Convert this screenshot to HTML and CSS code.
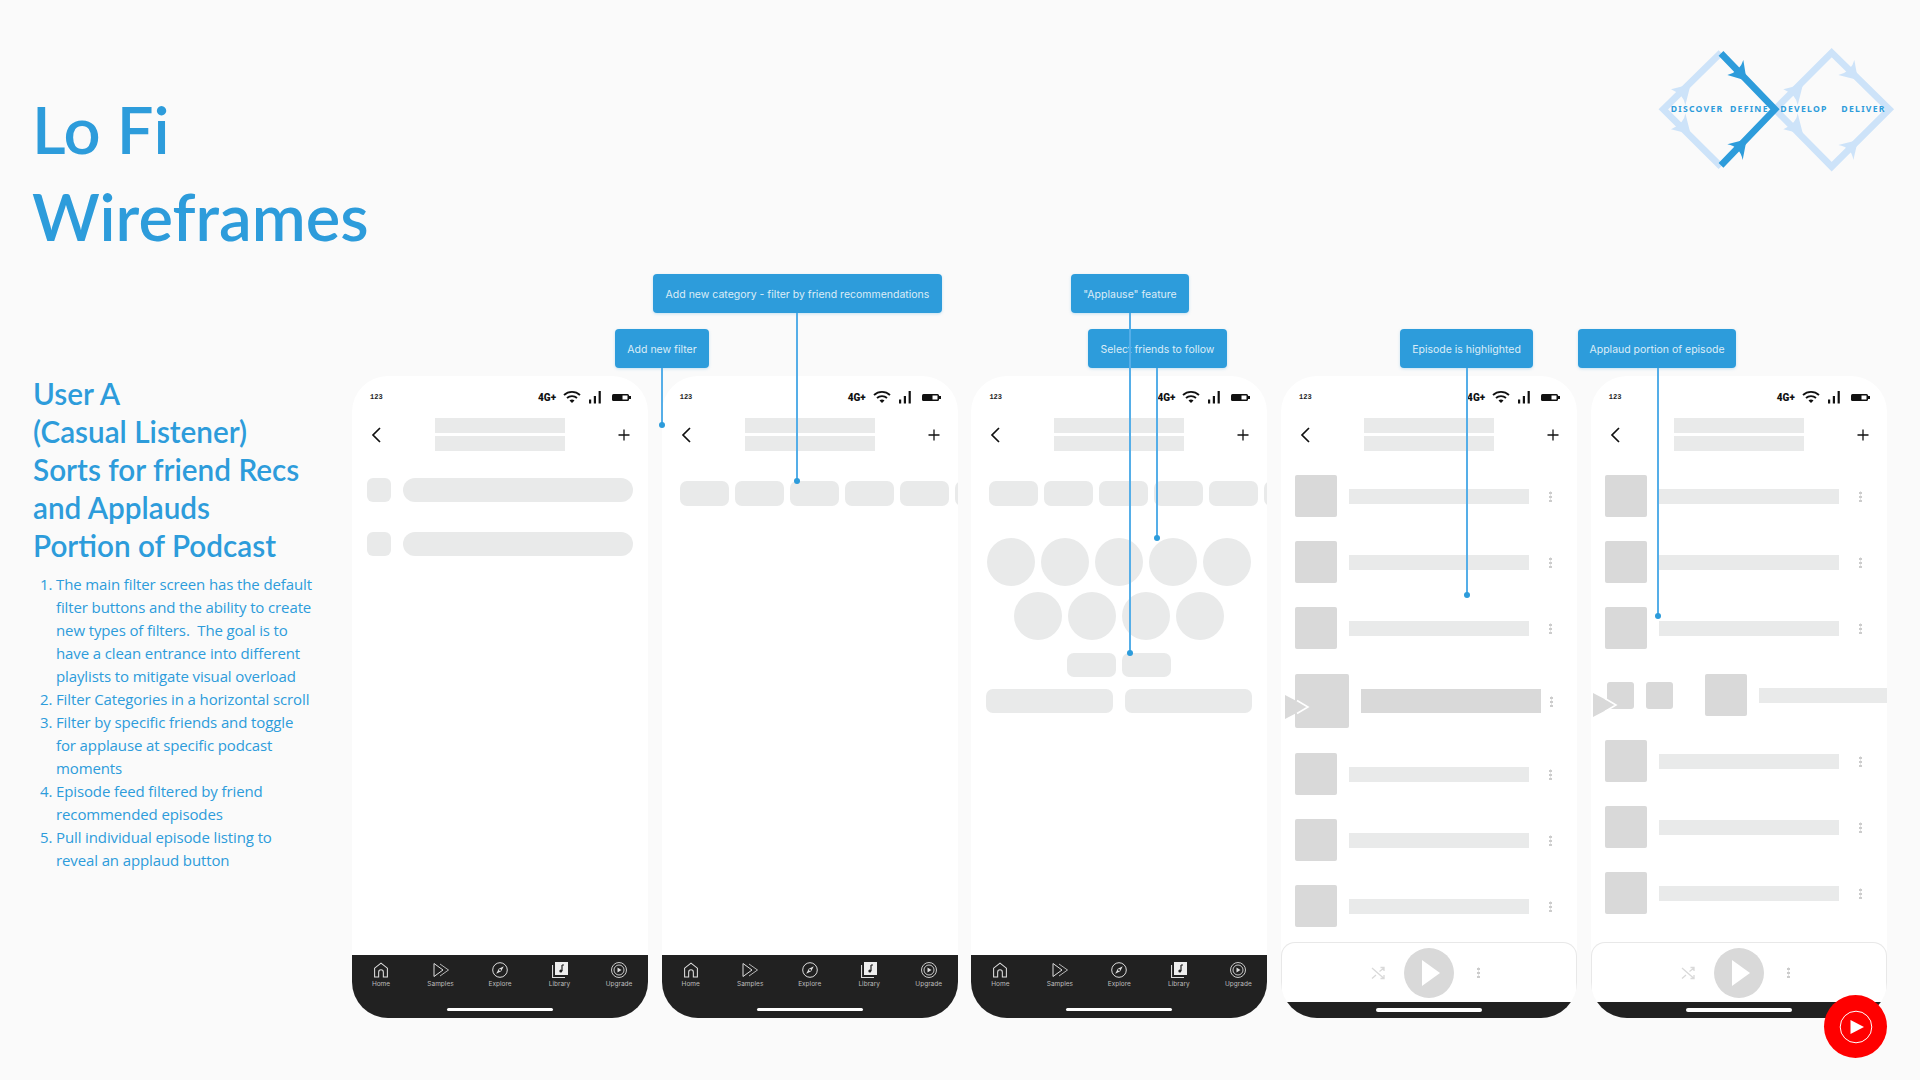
FILE: index.html
```html
<!DOCTYPE html>
<html lang="en">
<head>
    <meta charset="UTF-8">
    <title>Lo Fi Wireframes</title>
    <link rel="stylesheet" href="styles.css">
</head>
<body>
<svg class="defs" width="0" height="0">
    <symbol id="wifi" viewBox="0 0 18 14">
        <path d="M1 5c4.500-4.300 11.500-4.300 16 0M4 8c2.800-2.600 7.200-2.600 10 0" fill="none" stroke="#111" stroke-width="1.800"/>
        <path d="M6.500 10.500c1.500-1.300 3.500-1.300 5 0L9 13z" fill="#111"/>
    </symbol>
    <symbol id="signal" viewBox="0 0 12 13">
        <rect x="0" y="8.500" width="2.200" height="4" fill="#111"/>
        <rect x="4.800" y="5" width="2.200" height="7.500" fill="#111"/>
        <rect x="9.600" y="0" width="2.200" height="12.500" fill="#111"/>
    </symbol>
    <symbol id="battery" viewBox="0 0 19 9">
        <rect x="0" y="1" width="17" height="7" rx="1.500" fill="#111"/>
        <rect x="10.500" y="2.500" width="5" height="4" fill="#fff"/>
        <rect x="17" y="3" width="2" height="3" fill="#111"/>
    </symbol>
    <symbol id="back" viewBox="0 0 12 18">
        <path d="M10 2 3 9l7 7" fill="none" stroke="#111" stroke-width="1.700"/>
    </symbol>
    <symbol id="plus" viewBox="0 0 12 12">
        <path d="M6 .5v11M.5 6h11" fill="none" stroke="#111" stroke-width="1.300"/>
    </symbol>
    <symbol id="home" viewBox="0 0 14 15">
        <path d="M1 14V5.800L7 1l6 4.800V14H9.200V9.500a2.200 2.200 0 0 0-4.400 0V14z" fill="none" stroke="#ddd" stroke-width="1"/>
    </symbol>
    <symbol id="samples" viewBox="0 0 16 15">
        <path d="M1 1v13l9-6.500z" fill="none" stroke="#ddd" stroke-width="1"/>
        <path d="M7 1.500 15.500 7.500 7 13.500" fill="none" stroke="#ddd" stroke-width=".8"/>
    </symbol>
    <symbol id="explore" viewBox="0 0 16 16">
        <circle cx="8" cy="8" r="7.300" fill="none" stroke="#ddd" stroke-width="1"/>
        <path d="M11.800 4.200 9.200 9.200 4.200 11.800 6.800 6.800z" fill="#ddd"/>
        <circle cx="8" cy="8" r="1" fill="#212121"/>
    </symbol>
    <symbol id="library" viewBox="0 0 16 16">
        <path d="M.5 3v12.500H13" fill="none" stroke="#ddd" stroke-width="1.200"/>
        <rect x="3" y="0" width="13" height="13" fill="#eee"/>
        <path d="M10 3v6" stroke="#212121" stroke-width="1.200"/>
        <circle cx="8.800" cy="9" r="1.500" fill="#212121"/>
        <path d="M10 3h2" stroke="#212121" stroke-width="1.200"/>
    </symbol>
    <symbol id="upgrade" viewBox="0 0 16 16">
        <circle cx="8" cy="8" r="7.500" fill="none" stroke="#ddd" stroke-width=".9"/>
        <circle cx="8" cy="8" r="5" fill="none" stroke="#ddd" stroke-width=".9"/>
        <path d="M6.500 5.500v5L10.500 8z" fill="#ddd"/>
    </symbol>
    <symbol id="shuffle" viewBox="0 0 14 14">
        <path d="M1 2 13 12.500M1 12.500 5 9M8.500 5.500 13 2M9.500 1.500H13V5M13 9v3.500H9.500" fill="none" stroke="#d9d9d9" stroke-width="1.300"/>
    </symbol>
    <symbol id="marker" viewBox="0 0 26 24">
        <polygon points="0,0 23,12 0,24" fill="#d9d9d9"/>
        <polyline points="12,5.500 23,12 12,18.500" fill="none" stroke="#fff" stroke-width="1.600"/>
    </symbol>
</svg>

<main class="slide">
    <header class="top">
        <h1 class="title">Lo Fi<br>Wireframes</h1>
        <svg class="logo" width="280" height="160" viewBox="0 0 840 480">
            <g fill="#cde3f9">
                <path d="M405 238 575 68 748 238 575 410Z" fill="none" stroke="#cde3f9" stroke-width="20"/>
                <path d="M243 68 70 238 243 410" fill="none" stroke="#cde3f9" stroke-width="20"/>
                <path d="M93 178 152 163 136 226Q133 195 93 178ZM93 298 152 313 136 250Q133 281 93 298Z"/>
                <path d="M430 178 489 163 473 226Q470 195 430 178ZM430 298 489 313 473 250Q470 281 430 298Z"/>
                <path d="M595 135 654 150 643 90Q635 125 595 135ZM595 345 654 330 640 390Q635 352 595 345Z"/>
            </g>
            <g fill="#2d9cdb">
                <path d="M243 70 405 238 243 406" fill="none" stroke="#2d9cdb" stroke-width="20"/>
                <path d="M262 135 320 152 310 90Q300 125 262 135ZM262 343 320 328 308 390Q300 350 262 343Z"/>
            </g>
            <g class="logo-text">
                <text x="92" y="247">DISCOVER</text>
                <text x="270" y="247">DEFINE</text>
                <text x="421" y="247">DEVELOP</text>
                <text x="604" y="247">DELIVER</text>
            </g>
        </svg>
    </header>

    <section class="main">
        <aside class="side">
            <h2 class="side-title">User A<br>(Casual Listener)<br>Sorts for friend Recs<br>and Applauds<br>Portion of Podcast</h2>
            <ol class="steps">
                <li>The main filter screen has the default filter buttons and the ability to create new types of filters.&nbsp; The goal is to have a clean entrance into different playlists to mitigate visual overload</li>
                <li>Filter Categories in a horizontal scroll</li>
                <li>Filter by specific friends and toggle for applause at specific podcast moments</li>
                <li>Episode feed filtered by friend recommended episodes</li>
                <li>Pull individual episode listing to reveal an applaud button</li>
            </ol>
        </aside>

        <div class="phones">
            <!-- screen 1 -->
            <article class="phone">
                <div class="status"><span class="time">123</span><span class="net">4G+</span><svg class="i-wifi"><use href="#wifi"/></svg><svg class="i-signal"><use href="#signal"/></svg><svg class="i-battery"><use href="#battery"/></svg></div>
                <div class="nav"><svg class="i-back"><use href="#back"/></svg><div class="nav-title"><span></span><span></span></div><svg class="i-plus"><use href="#plus"/></svg></div>
                <div class="screen filters">
                    <div class="filter"><span class="check"></span><span class="pill"></span></div>
                    <div class="filter"><span class="check"></span><span class="pill"></span></div>
                </div>
                <nav class="tabs">
                    <div class="tab-row">
                        <div class="tab"><svg><use href="#home"/></svg>Home</div>
                        <div class="tab"><svg><use href="#samples"/></svg>Samples</div>
                        <div class="tab"><svg><use href="#explore"/></svg>Explore</div>
                        <div class="tab"><svg><use href="#library"/></svg>Library</div>
                        <div class="tab"><svg><use href="#upgrade"/></svg>Upgrade</div>
                    </div>
                    <span class="bar"></span>
                </nav>
            </article>

            <!-- screen 2 -->
            <article class="phone">
                <div class="status"><span class="time">123</span><span class="net">4G+</span><svg class="i-wifi"><use href="#wifi"/></svg><svg class="i-signal"><use href="#signal"/></svg><svg class="i-battery"><use href="#battery"/></svg></div>
                <div class="nav"><svg class="i-back"><use href="#back"/></svg><div class="nav-title"><span></span><span></span></div><svg class="i-plus"><use href="#plus"/></svg></div>
                <div class="screen">
                    <div class="chips"><span></span><span></span><span></span><span></span><span></span><span></span></div>
                </div>
                <nav class="tabs">
                    <div class="tab-row">
                        <div class="tab"><svg><use href="#home"/></svg>Home</div>
                        <div class="tab"><svg><use href="#samples"/></svg>Samples</div>
                        <div class="tab"><svg><use href="#explore"/></svg>Explore</div>
                        <div class="tab"><svg><use href="#library"/></svg>Library</div>
                        <div class="tab"><svg><use href="#upgrade"/></svg>Upgrade</div>
                    </div>
                    <span class="bar"></span>
                </nav>
            </article>

            <!-- screen 3 -->
            <article class="phone">
                <div class="status"><span class="time">123</span><span class="net">4G+</span><svg class="i-wifi"><use href="#wifi"/></svg><svg class="i-signal"><use href="#signal"/></svg><svg class="i-battery"><use href="#battery"/></svg></div>
                <div class="nav"><svg class="i-back"><use href="#back"/></svg><div class="nav-title"><span></span><span></span></div><svg class="i-plus"><use href="#plus"/></svg></div>
                <div class="screen">
                    <div class="chips"><span></span><span></span><span></span><span></span><span></span><span></span></div>
                    <div class="friends"><span></span><span></span><span></span><span></span><span></span></div>
                    <div class="friends"><span></span><span></span><span></span><span></span></div>
                    <div class="toggles"><span></span><span></span></div>
                    <div class="actions"><span></span><span></span></div>
                </div>
                <nav class="tabs">
                    <div class="tab-row">
                        <div class="tab"><svg><use href="#home"/></svg>Home</div>
                        <div class="tab"><svg><use href="#samples"/></svg>Samples</div>
                        <div class="tab"><svg><use href="#explore"/></svg>Explore</div>
                        <div class="tab"><svg><use href="#library"/></svg>Library</div>
                        <div class="tab"><svg><use href="#upgrade"/></svg>Upgrade</div>
                    </div>
                    <span class="bar"></span>
                </nav>
            </article>

            <!-- screen 4 -->
            <article class="phone">
                <div class="status"><span class="time">123</span><span class="net">4G+</span><svg class="i-wifi"><use href="#wifi"/></svg><svg class="i-signal"><use href="#signal"/></svg><svg class="i-battery"><use href="#battery"/></svg></div>
                <div class="nav"><svg class="i-back"><use href="#back"/></svg><div class="nav-title"><span></span><span></span></div><svg class="i-plus"><use href="#plus"/></svg></div>
                <div class="screen feed">
                    <div class="row"><span class="thumb"></span><span class="line"></span><span class="dots"></span></div>
                    <div class="row"><span class="thumb"></span><span class="line"></span><span class="dots"></span></div>
                    <div class="row"><span class="thumb"></span><span class="line"></span><span class="dots"></span></div>
                    <div class="row row-big"><span class="thumb"></span><span class="line"></span><span class="dots"></span><svg class="marker"><use href="#marker"/></svg></div>
                    <div class="row"><span class="thumb"></span><span class="line"></span><span class="dots"></span></div>
                    <div class="row"><span class="thumb"></span><span class="line"></span><span class="dots"></span></div>
                    <div class="row"><span class="thumb"></span><span class="line"></span><span class="dots"></span></div>
                </div>
                <div class="player"><svg class="i-shuffle"><use href="#shuffle"/></svg><span class="play"></span><span class="dots"></span></div>
                <div class="tabs-short"><span class="bar"></span></div>
            </article>

            <!-- screen 5 -->
            <article class="phone">
                <div class="status"><span class="time">123</span><span class="net">4G+</span><svg class="i-wifi"><use href="#wifi"/></svg><svg class="i-signal"><use href="#signal"/></svg><svg class="i-battery"><use href="#battery"/></svg></div>
                <div class="nav"><svg class="i-back"><use href="#back"/></svg><div class="nav-title"><span></span><span></span></div><svg class="i-plus"><use href="#plus"/></svg></div>
                <div class="screen feed">
                    <div class="row"><span class="thumb"></span><span class="line"></span><span class="dots"></span></div>
                    <div class="row"><span class="thumb"></span><span class="line"></span><span class="dots"></span></div>
                    <div class="row"><span class="thumb"></span><span class="line"></span><span class="dots"></span></div>
                    <div class="row row-swiped"><span class="square"></span><span class="square"></span><span class="thumb"></span><span class="line"></span><svg class="marker"><use href="#marker"/></svg></div>
                    <div class="row"><span class="thumb"></span><span class="line"></span><span class="dots"></span></div>
                    <div class="row"><span class="thumb"></span><span class="line"></span><span class="dots"></span></div>
                    <div class="row"><span class="thumb"></span><span class="line"></span><span class="dots"></span></div>
                </div>
                <div class="player"><svg class="i-shuffle"><use href="#shuffle"/></svg><span class="play"></span><span class="dots"></span></div>
                <div class="tabs-short"><span class="bar"></span></div>
            </article>
        </div>
    </section>

    <!-- callouts sit over the screens -->
    <div class="note note-filter">Add new filter<i class="lead"></i></div>
    <div class="note note-category">Add new category - filter by friend recommendations<i class="lead"></i></div>
    <div class="note note-friends">Select friends to follow<i class="lead"></i></div>
    <div class="note note-applause">"Applause" feature<i class="lead"></i></div>
    <div class="note note-episode">Episode is highlighted<i class="lead"></i></div>
    <div class="note note-portion">Applaud portion of episode<i class="lead"></i></div>

    <div class="badge">
        <svg width="34" height="34" viewBox="0 0 34 34">
            <circle cx="17" cy="17" r="15.800" fill="none" stroke="#fff" stroke-width="1"/>
            <path d="M11.500 10v14L25 17z" fill="#fff"/>
        </svg>
    </div>
</main>
</body>
</html>
```

FILE: styles.css
```css
* {
    box-sizing: border-box;
}

body {
    margin: 0;
    background-color: #fafafa;
    font-family: 'Inter', sans-serif;
}

.defs {
    position: absolute;
}

.slide {
    position: relative;
    width: 1920px;
    height: 1080px;
    overflow: hidden;
}

/* top */
.top {
    display: flex;
    justify-content: space-between;
    align-items: flex-start;
    height: 376px;
    padding: 30px 0 0 32px;
}

.title {
    margin: 56px 0 0;
    font-family: 'Lato', sans-serif;
    font-size: 65px;
    font-weight: 600;
    line-height: 87px;
    color: #2d9cdb;
}

.logo-text {
    font-family: 'Noto Sans', sans-serif;
    font-size: 26px;
    font-weight: 700;
    letter-spacing: 3.800px;
    fill: #2d9cdb;
}

/* left column */
.main {
    display: flex;
}

.side {
    flex: 0 0 352px;
    padding-left: 33px;
    color: #2d9cdb;
}

.side-title {
    margin: -1px 0 8px;
    font-family: 'Lato', sans-serif;
    font-size: 29.700px;
    font-weight: 600;
    line-height: 38px;
}

.steps {
    width: 281px;
    margin: 0;
    padding-left: 23px;
    font-family: 'Open Sans', sans-serif;
    font-size: 15px;
    letter-spacing: -0.12px;
    line-height: 23px;
}

/* phones */
.phones {
    display: flex;
    gap: 13.700px;
}

.phone {
    display: flex;
    flex-direction: column;
    width: 296px;
    height: 642px;
    border-radius: 36px;
    background-color: #fff;
    overflow: hidden;
}

.status {
    display: flex;
    align-items: center;
    flex: 0 0 42px;
    padding: 0 17px 0 18px;
}

.time {
    margin-right: auto;
    font-family: 'Liberation Mono', monospace;
    font-size: 7px;
    font-weight: 700;
    color: #222;
}

.net {
    margin-right: 7px;
    font-family: 'Roboto', sans-serif;
    font-size: 10px;
    font-weight: 900;
    color: #111;
}

.i-wifi {
    width: 18px;
    height: 14px;
    margin-right: 8px;
}

.i-signal {
    width: 12px;
    height: 13px;
    margin-right: 11px;
}

.i-battery {
    width: 19px;
    height: 9px;
}

.nav {
    display: flex;
    justify-content: space-between;
    align-items: center;
    flex: 0 0 33px;
    padding: 0 18px 0 18px;
}

.i-back {
    width: 12px;
    height: 18px;
}

.i-plus {
    width: 12px;
    height: 12px;
}

.nav-title {
    display: flex;
    flex-direction: column;
    gap: 3px;
    width: 130px;
}

.nav-title span {
    height: 15px;
    background-color: #e9eaea;
}

.screen {
    flex: 1;
    min-height: 0;
}

.filters {
    display: flex;
    flex-direction: column;
    gap: 30px;
    padding: 27px 15px 0;
}

.filter {
    display: flex;
    gap: 12px;
}

.check {
    flex: 0 0 24px;
    height: 24px;
    border-radius: 6px;
    background-color: #e9eaea;
}

.pill {
    flex: 1;
    height: 24px;
    border-radius: 12px;
    background-color: #e9eaea;
}

.chips {
    display: flex;
    gap: 6px;
    margin-top: 30px;
    padding-left: 18px;
}

.chips span {
    flex: 0 0 49px;
    height: 25px;
    border-radius: 7px;
    background-color: #e9eaea;
}

.friends {
    display: flex;
    justify-content: center;
    gap: 6px;
    margin-top: 6px;
}

.chips + .friends {
    margin-top: 32px;
}

.friends span {
    width: 48px;
    height: 48px;
    border-radius: 50%;
    background-color: #e9eaea;
}

.toggles {
    display: flex;
    justify-content: center;
    gap: 6px;
    margin-top: 13px;
}

.toggles span {
    width: 49px;
    height: 24px;
    border-radius: 7px;
    background-color: #e9eaea;
}

.actions {
    display: flex;
    justify-content: center;
    gap: 12px;
    margin-top: 12px;
}

.actions span {
    width: 127px;
    height: 24px;
    border-radius: 7px;
    background-color: #e9eaea;
}

/* feed */
.feed {
    display: flex;
    flex-direction: column;
    gap: 24px;
    padding-top: 24px;
}

.row {
    position: relative;
    display: flex;
    align-items: center;
    gap: 12px;
    padding-left: 14px;
}

.thumb {
    flex: 0 0 42px;
    height: 42px;
    border-radius: 2px;
    background-color: #d9d9d9;
}

.line {
    flex: 0 0 180px;
    height: 15px;
    background-color: #e9eaea;
}

.dots {
    width: 3px;
    height: 11px;
    margin-left: 8px;
    background: radial-gradient(circle, #ccc 1.400px, transparent 1.600px) 0 0 / 3px 4px;
}

.row-big {
    margin: 1px 0;
}

.row-big .thumb {
    flex-basis: 54px;
    height: 54px;
}

.row-big .line {
    height: 24px;
    background-color: #d9d9d9;
}

.row-big .dots {
    margin-left: -3px;
}

.row-swiped {
    margin-top: 1px;
    padding-left: 16px;
}

.row-swiped .thumb {
    margin-left: 20px;
}

.row-swiped .line {
    flex: 1;
}

.square {
    flex: 0 0 27px;
    height: 27px;
    border-radius: 3px;
    background-color: #d9d9d9;
}

.marker {
    position: absolute;
    left: 4px;
    top: 21px;
    width: 26px;
    height: 24px;
}

.row-swiped .marker {
    top: 19px;
    left: 2px;
}

/* player */
.player {
    display: grid;
    grid-template-columns: 1fr auto 1fr;
    align-items: center;
    column-gap: 19px;
    flex: 0 0 60px;
    border: 1px solid #e8e8e8;
    border-bottom: 0;
    border-radius: 14px 14px 0 0;
}

.player .dots {
    margin-left: 4px;
}

.i-shuffle {
    justify-self: end;
    width: 14px;
    height: 14px;
}

.play {
    position: relative;
    width: 50px;
    height: 50px;
    border-radius: 50%;
    background-color: #d9d9d9;
}

.play::after {
    content: "";
    position: absolute;
    left: 18px;
    top: 12px;
    border-left: 18px solid #fff;
    border-top: 13px solid transparent;
    border-bottom: 13px solid transparent;
}

.tabs-short {
    display: flex;
    justify-content: center;
    flex: 0 0 16px;
    padding-top: 6px;
    background-color: #212121;
}

/* tab bar */
.tabs {
    display: flex;
    flex-direction: column;
    align-items: center;
    flex: 0 0 63px;
    padding-top: 7px;
    background-color: #212121;
}

.tab-row {
    display: flex;
    justify-content: center;
    width: 296px;
}

.tab {
    display: flex;
    flex-direction: column;
    align-items: center;
    flex: 0 0 59.500px;
    gap: 2px;
    font-size: 6.500px;
    line-height: 8px;
    color: #bdbdbd;
}

.tab svg {
    width: 16px;
    height: 16px;
}

.bar {
    display: block;
    width: 106px;
    height: 3.500px;
    margin-top: auto;
    margin-bottom: 7px;
    border-radius: 2px;
    background-color: #fff;
}

.tabs-short .bar {
    margin: 0;
}

/* callouts */
.note {
    position: absolute;
    display: flex;
    justify-content: center;
    align-items: center;
    height: 39px;
    padding-top: 1px;
    border-radius: 4px;
    background-color: #2d9cdb;
    box-shadow: 0 1px 3px rgba(45, 156, 219, 0.25);
    font-size: 10.500px;
    color: #dcecf7;
    white-space: nowrap;
}

.lead {
    position: absolute;
    top: 100%;
    width: 2px;
    background-color: #55aee8;
}

.lead::after {
    content: "";
    position: absolute;
    left: -2px;
    bottom: -3px;
    width: 6px;
    height: 6px;
    border-radius: 50%;
    background-color: #2d9cdb;
}

.note-filter {
    left: 615px;
    top: 329px;
    width: 94px;
}

.note-filter .lead {
    left: 46px;
    height: 57px;
}

.note-category {
    left: 653px;
    top: 274px;
    width: 289px;
}

.note-category .lead {
    left: 143px;
    height: 168px;
}

.note-applause {
    left: 1071px;
    top: 274px;
    width: 118px;
}

.note-applause .lead {
    left: 58px;
    height: 340px;
}

.note-friends {
    left: 1088px;
    top: 329px;
    width: 139px;
}

.note-friends .lead {
    left: 68px;
    height: 170px;
}

.note-episode {
    left: 1400px;
    top: 329px;
    width: 133px;
}

.note-episode .lead {
    left: 66px;
    height: 227px;
}

.note-portion {
    left: 1578px;
    top: 329px;
    width: 158px;
}

.note-portion .lead {
    left: 79px;
    height: 248px;
}

.badge {
    position: absolute;
    left: 1824px;
    top: 995px;
    display: flex;
    justify-content: center;
    align-items: center;
    width: 63px;
    height: 63px;
    border-radius: 50%;
    background-color: #ff0000;
}
```
